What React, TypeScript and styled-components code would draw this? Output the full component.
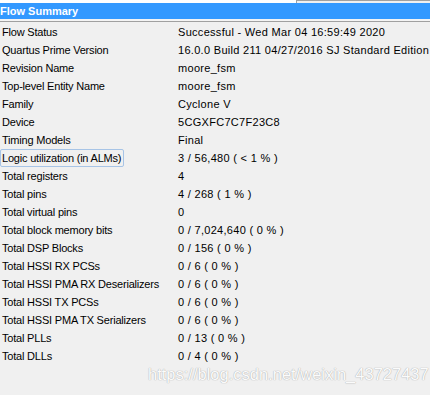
import React from 'react';
import styled, { createGlobalStyle } from 'styled-components';

const GlobalStyle = createGlobalStyle`
  html, body {
    margin: 0;
    padding: 0;
    background: #f0f0f0;
  }
  body {
    font-family: Tahoma, "Liberation Sans", Arial, sans-serif;
    font-size: 11px;
    color: #000;
  }
`;

const rows: [string, string][] = [
  ['Flow Status', 'Successful - Wed Mar 04 16:59:49 2020'],
  ['Quartus Prime Version', '16.0.0 Build 211 04/27/2016 SJ Standard Edition'],
  ['Revision Name', 'moore_fsm'],
  ['Top-level Entity Name', 'moore_fsm'],
  ['Family', 'Cyclone V'],
  ['Device', '5CGXFC7C7F23C8'],
  ['Timing Models', 'Final'],
  ['Logic utilization (in ALMs)', '3 / 56,480 ( < 1 % )'],
  ['Total registers', '4'],
  ['Total pins', '4 / 268 ( 1 % )'],
  ['Total virtual pins', '0'],
  ['Total block memory bits', '0 / 7,024,640 ( 0 % )'],
  ['Total DSP Blocks', '0 / 156 ( 0 % )'],
  ['Total HSSI RX PCSs', '0 / 6 ( 0 % )'],
  ['Total HSSI PMA RX Deserializers', '0 / 6 ( 0 % )'],
  ['Total HSSI TX PCSs', '0 / 6 ( 0 % )'],
  ['Total HSSI PMA TX Serializers', '0 / 6 ( 0 % )'],
  ['Total PLLs', '0 / 13 ( 0 % )'],
  ['Total DLLs', '0 / 4 ( 0 % )'],
];

export default function App() {
  return (
    <>
      <GlobalStyle />
      <Page>
        <TopStrip>
          <WhitePart />
          <FramePart />
        </TopStrip>
        <Header>Flow Summary</Header>
        <HeaderRule />
        <Table>
          {rows.map(([label, value], i) => (
            <Row key={label}>
              <Label $focused={i === 7}>{label}</Label>
              <Value>{value}</Value>
            </Row>
          ))}
        </Table>
        <Watermark>https://blog.csdn.net/weixin_43727437</Watermark>
      </Page>
    </>
  );
}

const Page = styled.div`
  width: 430px;
  height: 395px;
  background: #f0f0f0;
  position: relative;
  overflow: hidden;
`;

const TopStrip = styled.div`
  display: flex;
  height: 3px;
`;

const WhitePart = styled.div`
  width: 296px;
  background: #ffffff;
`;

const FramePart = styled.div`
  flex: 1;
  background: #f0f0f0;
  border-left: 1px solid #a0a0a0;
  border-top: 1px solid #a0a0a0;
  box-sizing: border-box;
`;

const Header = styled.div`
  height: 16px;
  background: #3399ff;
  color: #ffffff;
  font-weight: bold;
  font-size: 11px;
  line-height: 16px;
`;

const HeaderRule = styled.div`
  height: 2px;
  border-bottom: 1px solid #a0a0a0;
  background: #f4f4f4;
  margin-bottom: 1px;
`;

const Table = styled.div`
  display: flex;
  flex-direction: column;
`;

const Row = styled.div`
  display: grid;
  grid-template-columns: 178px 1fr;
  height: 18px;
  align-items: center;
`;

const Label = styled.div<{ $focused?: boolean }>`
  justify-self: start;
  padding: 1px 2px 1px 1px;
  white-space: nowrap;
  line-height: 14px;
  letter-spacing: -0.2px;
  border: 1px solid ${(p) => (p.$focused ? '#a7c4e6' : 'transparent')};
  border-radius: ${(p) => (p.$focused ? '2px' : '0')};
`;

const Value = styled.div`
  white-space: nowrap;
  line-height: 14px;
  letter-spacing: 0.3px;
`;

const Watermark = styled.div`
  position: absolute;
  left: 148px;
  top: 365px;
  font-family: Arial, "Liberation Sans", sans-serif;
  font-size: 16.5px;
  color: #fbfbfb;
  text-shadow: 0 0 1px #a8a8a8, 0 0 1px #c0c0c0;
  white-space: nowrap;
`;
